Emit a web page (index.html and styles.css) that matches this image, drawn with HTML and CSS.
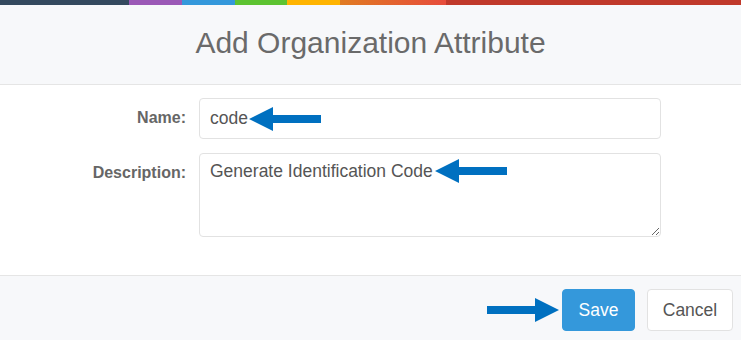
FILE: index.html
```html
<!DOCTYPE html>
<html lang="en">
<head>
    <meta charset="UTF-8">
    <meta name="viewport" content="width=device-width, initial-scale=1.0">
    <title>Add Organization Attribute</title>
    <link rel="stylesheet" href="styles.css">
</head>
<body>
    <div class="modal">
        <div class="stripe">
            <span class="s-dark"></span>
            <span class="s-purple"></span>
            <span class="s-blue"></span>
            <span class="s-green"></span>
            <span class="s-yellow"></span>
            <span class="s-orange"></span>
            <span class="s-red"></span>
        </div>
        <div class="modal-header">
            <h2 class="title">Add Organization Attribute</h2>
        </div>
        <form class="modal-body">
            <label class="label" for="name">Name:</label>
            <div class="field">
                <input id="name" class="input" type="text" value="code">
                <svg class="arrow arrow-name" width="72" height="24" viewBox="0 0 72 24">
                    <path d="M0 12 L24 0 L24 8 L72 8 L72 16 L24 16 L24 24 Z" fill="#0070c0"/>
                </svg>
            </div>
            <label class="label" for="desc">Description:</label>
            <div class="field">
                <textarea id="desc" class="input textarea">Generate Identification Code</textarea>
                <svg class="arrow arrow-desc" width="72" height="24" viewBox="0 0 72 24">
                    <path d="M0 12 L24 0 L24 8 L72 8 L72 16 L24 16 L24 24 Z" fill="#0070c0"/>
                </svg>
            </div>
        </form>
        <div class="modal-footer">
            <svg class="arrow-save" width="72" height="24" viewBox="0 0 72 24">
                <path d="M72 12 L48 0 L48 8 L0 8 L0 16 L48 16 L48 24 Z" fill="#0070c0"/>
            </svg>
            <button class="btn btn-primary" type="button">Save</button>
            <button class="btn btn-default" type="button">Cancel</button>
        </div>
    </div>
</body>
</html>
```

FILE: styles.css
```css
body {
    margin: 0;
    font-family: "Liberation Sans", Arial, sans-serif;
    background: #fff;
    color: #555;
}
.modal {
    width: 741px;
    height: 340px;
    display: flex;
    flex-direction: column;
}
.stripe {
    display: flex;
    height: 5px;
}
.stripe span {
    display: block;
    height: 100%;
}
.s-dark { width: 129px; background: #34495e; }
.s-purple { width: 53px; background: #9b59b6; }
.s-blue { width: 53px; background: #3498db; }
.s-green { width: 52px; background: #5dc331; }
.s-yellow { width: 53px; background: #ffb400; }
.s-orange { width: 106px; background: linear-gradient(90deg, #e07b22, #e74c3c); }
.s-red { flex: 1; background: #c0392b; }
.modal-header {
    background: #f7f8fa;
    border-bottom: 1px solid #e5e5e5;
    height: 79px;
    display: flex;
    align-items: center;
    justify-content: center;
}
.title {
    margin: 0;
    font-weight: normal;
    font-size: 30px;
    color: #6a6a6a;
    padding-bottom: 3px;
}
.modal-body {
    margin: 0;
    display: grid;
    grid-template-columns: 186px 462px;
    column-gap: 13px;
    row-gap: 14px;
    padding: 13px 0 38px;
    border-bottom: 1px solid #e5e5e5;
}
.label {
    text-align: right;
    font-weight: bold;
    font-size: 16px;
    color: #666;
    padding-top: 11px;
}
.field {
    position: relative;
}
.input {
    display: block;
    box-sizing: border-box;
    width: 462px;
    height: 41px;
    margin: 0;
    padding: 8px 10px;
    border: 1px solid #e2e2e2;
    border-radius: 4px;
    font-family: "Liberation Sans", Arial, sans-serif;
    font-size: 17.5px;
    color: #555;
    background: #fff;
    outline: none;
}
.textarea {
    height: 84px;
    padding-top: 7px;
    resize: vertical;
}
.arrow {
    position: absolute;
    pointer-events: none;
}
.arrow-name { left: 50px; top: 9px; }
.arrow-desc { left: 236px; top: 6px; }
.modal-footer {
    flex: 1;
    background: #f7f8fa;
    display: flex;
    justify-content: flex-end;
    align-items: flex-start;
    padding: 13px 8px 0 0;
    gap: 12px;
}
.arrow-save {
    margin-top: 9px;
    margin-left: 2px;
    margin-right: -9px;
}
.btn {
    height: 42px;
    font-family: "Liberation Sans", Arial, sans-serif;
    font-size: 17.5px;
    border-radius: 4px;
    cursor: pointer;
}
.btn-primary {
    width: 73px;
    background: #3498db;
    border: 1px solid #3498db;
    color: #fff;
}
.btn-default {
    width: 86px;
    background: #fff;
    border: 1px solid #e2e2e2;
    color: #555;
}
```
